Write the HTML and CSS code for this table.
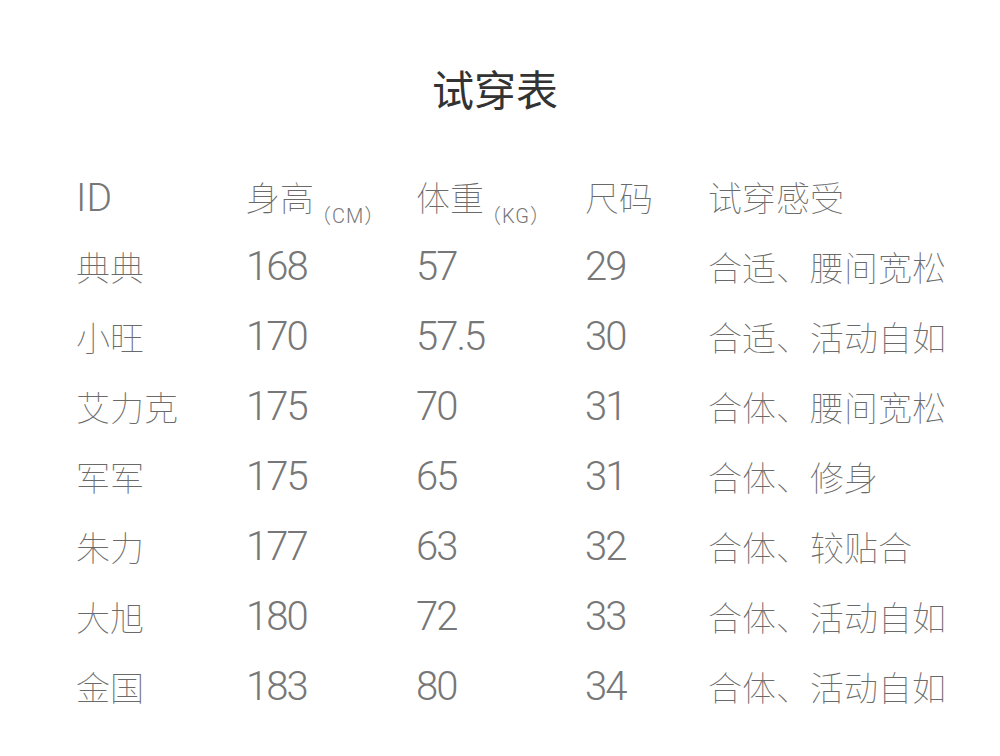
FILE: index.html
```html
<!DOCTYPE html>
<html lang="zh-CN">
<head>
<meta charset="utf-8">
<title>试穿表</title>
<link rel="stylesheet" href="styles.css">
</head>
<body>
<main class="page">
  <h1 class="title">试穿表</h1>
  <div class="table">
    <div class="cell head"><span class="latin">ID</span></div>
    <div class="cell head">身高<span class="unit">（CM）</span></div>
    <div class="cell head">体重<span class="unit">（KG）</span></div>
    <div class="cell head">尺码</div>
    <div class="cell head">试穿感受</div>

    <div class="cell">典典</div><div class="cell num">168</div><div class="cell num">57</div><div class="cell num">29</div><div class="cell">合适、腰间宽松</div>
    <div class="cell">小旺</div><div class="cell num">170</div><div class="cell num">57.5</div><div class="cell num">30</div><div class="cell">合适、活动自如</div>
    <div class="cell">艾力克</div><div class="cell num">175</div><div class="cell num">70</div><div class="cell num">31</div><div class="cell">合体、腰间宽松</div>
    <div class="cell">军军</div><div class="cell num">175</div><div class="cell num">65</div><div class="cell num">31</div><div class="cell">合体、修身</div>
    <div class="cell">朱力</div><div class="cell num">177</div><div class="cell num">63</div><div class="cell num">32</div><div class="cell">合体、较贴合</div>
    <div class="cell">大旭</div><div class="cell num">180</div><div class="cell num">72</div><div class="cell num">33</div><div class="cell">合体、活动自如</div>
    <div class="cell">金国</div><div class="cell num">183</div><div class="cell num">80</div><div class="cell num">34</div><div class="cell">合体、活动自如</div>
  </div>
</main>
</body>
</html>
```

FILE: styles.css
```css
html, body {
  margin: 0;
  padding: 0;
  background: #ffffff;
}

body {
  font-family: "Noto Sans CJK SC", "Noto Sans", sans-serif;
  width: 1000px;
  height: 756px;
  overflow: hidden;
}

.page {
  display: flex;
  flex-direction: column;
}

.title {
  margin: 67px 0 0 0;
  padding-right: 10px;
  height: 42px;
  font-size: 42px;
  line-height: 42px;
  font-weight: 400;
  color: #333333;
  text-align: center;
}

.table {
  margin-top: 53px;
  padding-left: 76px;
  display: grid;
  grid-template-columns: 170px 170px 169px 123px auto;
  grid-auto-rows: 70px;
  align-items: center;
  color: #6a6a6a;
}

.cell {
  font-size: 34px;
  line-height: 70px;
  font-weight: 100;
  white-space: nowrap;
}

.num, .latin {
  font-family: Roboto, "Noto Sans", sans-serif;
  font-size: 40px;
  font-weight: 300;
  letter-spacing: -2px;
  color: #777777;
}

.latin {
  font-size: 39px;
  letter-spacing: 0;
}

.unit {
  font-family: Roboto, "Noto Sans CJK SC", sans-serif;
  font-size: 20px;
  font-weight: 300;
  letter-spacing: 1px;
  vertical-align: -12px;
  line-height: 1;
  margin-left: -3px;
  color: #777777;
}
```
